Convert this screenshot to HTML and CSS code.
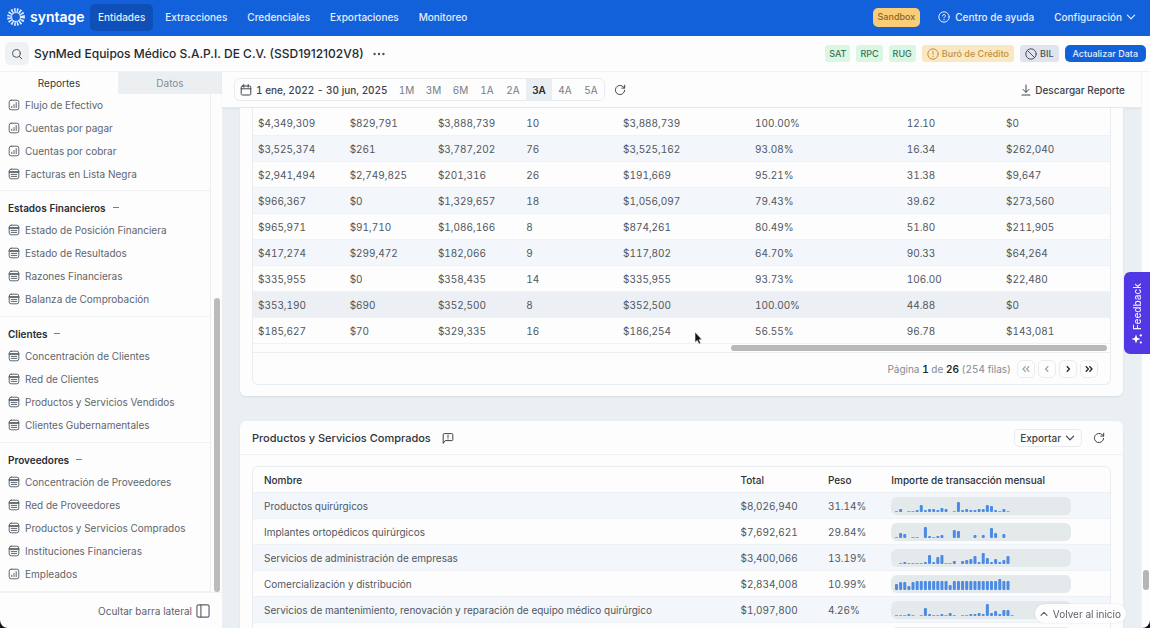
FILE: index.html
```html
<!DOCTYPE html>
<html lang="es">
<head>
<meta charset="utf-8">
<title>Syntage</title>
<link rel="stylesheet" href="styles.css">
</head>
<body>
<svg class="defs" aria-hidden="true">
  <symbol id="i-chart" viewBox="0 0 12 12"><rect x="1.2" y="1.2" width="9.6" height="9.6" rx="2"/><path d="M3.8 8.6V7.2M6 8.6V5.6M8.2 8.6V3.6"/></symbol>
  <symbol id="i-table" viewBox="0 0 12 12"><rect x="1.2" y="1.2" width="9.6" height="9.6" rx="2"/><path d="M1.2 3.6h9.6M1.2 4.4h9.6M3.2 6.4h5.6M3.2 8.4h5.6"/></symbol>
  <symbol id="i-reload" viewBox="0 0 12 12"><path d="M10.6 6.4A4.6 4.6 0 1 1 9.3 2.8L10.6 4M10.7 1.2V4.1H7.8"/></symbol>
  <symbol id="i-down" viewBox="0 0 10 10"><path d="M2 3.5l3 3 3-3"/></symbol>
</svg>

<header class="topbar">
  <a class="brand" href="#">
    <svg class="brand-mark" viewBox="0 0 20 20" aria-hidden="true"><circle cx="10" cy="10" r="6.4" stroke-width="5" stroke-dasharray="1.4 1.113"/><circle cx="10" cy="10" r="4.6" stroke-width="1.2" opacity=".6"/></svg>
    <span>syntage</span>
  </a>
  <nav class="mainnav">
    <a class="current" href="#">Entidades</a>
    <a href="#">Extracciones</a>
    <a href="#">Credenciales</a>
    <a href="#">Exportaciones</a>
    <a href="#">Monitoreo</a>
  </nav>
  <div class="topbar-end">
    <span class="sandbox">Sandbox</span>
    <a class="help" href="#"><svg class="ico" viewBox="0 0 12 12" aria-hidden="true"><circle cx="6" cy="6" r="5.2"/><path d="M4.6 4.8a1.4 1.4 0 1 1 2 1.3c-.5.2-.6.4-.6.8M6 8.4v.5"/></svg>Centro de ayuda</a>
    <button class="config" type="button">Configuración <svg class="ico" viewBox="0 0 10 10" aria-hidden="true"><use href="#i-down"/></svg></button>
  </div>
</header>

<div class="entity">
  <button class="search" type="button" aria-label="Buscar"><svg class="ico" viewBox="0 0 12 12" aria-hidden="true"><circle cx="5.4" cy="5.4" r="3.9"/><path d="M8.3 8.3l2.5 2.5"/></svg></button>
  <h1>SynMed Equipos Médico S.A.P.I. DE C.V. (SSD1912102V8)</h1>
  <button class="more" type="button" aria-label="Más opciones"><svg viewBox="0 0 12 4" aria-hidden="true"><circle cx="1.6" cy="2" r="1.2"/><circle cx="6" cy="2" r="1.2"/><circle cx="10.4" cy="2" r="1.2"/></svg></button>
  <div class="tags">
    <span class="tag ok">SAT</span>
    <span class="tag ok">RPC</span>
    <span class="tag ok">RUG</span>
    <span class="tag warn"><svg class="ico" viewBox="0 0 12 12" aria-hidden="true"><circle cx="6" cy="6" r="5.2"/><path d="M6 3.2v3.2M6 8.2v.6"/></svg>Buró de Crédito</span>
    <span class="tag off"><svg class="ico" viewBox="0 0 12 12" aria-hidden="true"><circle cx="6" cy="6" r="5.2"/><path d="M2.4 2.4l7.2 7.2"/></svg>BIL</span>
    <button class="update" type="button">Actualizar Data</button>
  </div>
</div>

<div class="body">
  <aside class="sidebar">
    <div class="tabs" role="tablist">
      <button type="button" role="tab" aria-selected="true">Reportes</button>
      <button type="button" role="tab" aria-selected="false">Datos</button>
    </div>
    <div class="side-scroll">
      <nav class="side-list">
        <section>
          <a href="#"><svg class="ico"><use href="#i-chart"/></svg>Flujo de Efectivo</a>
          <a href="#"><svg class="ico"><use href="#i-chart"/></svg>Cuentas por pagar</a>
          <a href="#"><svg class="ico"><use href="#i-chart"/></svg>Cuentas por cobrar</a>
          <a href="#"><svg class="ico"><use href="#i-table"/></svg>Facturas en Lista Negra</a>
        </section>
        <section>
          <h2>Estados Financieros <i></i></h2>
          <a href="#"><svg class="ico"><use href="#i-table"/></svg>Estado de Posición Financiera</a>
          <a href="#"><svg class="ico"><use href="#i-table"/></svg>Estado de Resultados</a>
          <a href="#"><svg class="ico"><use href="#i-table"/></svg>Razones Financieras</a>
          <a href="#"><svg class="ico"><use href="#i-table"/></svg>Balanza de Comprobación</a>
        </section>
        <section>
          <h2>Clientes <i></i></h2>
          <a href="#"><svg class="ico"><use href="#i-table"/></svg>Concentración de Clientes</a>
          <a href="#"><svg class="ico"><use href="#i-table"/></svg>Red de Clientes</a>
          <a href="#"><svg class="ico"><use href="#i-table"/></svg>Productos y Servicios Vendidos</a>
          <a href="#"><svg class="ico"><use href="#i-table"/></svg>Clientes Gubernamentales</a>
        </section>
        <section>
          <h2>Proveedores <i></i></h2>
          <a href="#"><svg class="ico"><use href="#i-table"/></svg>Concentración de Proveedores</a>
          <a href="#"><svg class="ico"><use href="#i-table"/></svg>Red de Proveedores</a>
          <a href="#"><svg class="ico"><use href="#i-table"/></svg>Productos y Servicios Comprados</a>
          <a href="#"><svg class="ico"><use href="#i-table"/></svg>Instituciones Financieras</a>
          <a href="#"><svg class="ico"><use href="#i-chart"/></svg>Empleados</a>
        </section>
      </nav>
      <div class="side-track"><div class="side-thumb"></div></div>
    </div>
    <button class="collapse" type="button">Ocultar barra lateral <svg class="ico" viewBox="0 0 12 12" aria-hidden="true"><rect x=".8" y=".8" width="10.4" height="10.4" rx="1.4"/><path d="M4.2 .8v10.4"/></svg></button>
  </aside>

  <main class="main">
    <div class="toolbar">
      <div class="range">
        <button class="dates" type="button"><svg class="ico" viewBox="0 0 12 12" aria-hidden="true"><rect x="1.2" y="2" width="9.6" height="9" rx="1.4"/><path d="M1.2 4.8h9.6M3.8 .6v2.6M8.2 .6v2.6"/></svg>1 ene, 2022 - 30 jun, 2025</button>
        <button type="button">1M</button>
        <button type="button">3M</button>
        <button type="button">6M</button>
        <button type="button">1A</button>
        <button type="button">2A</button>
        <button class="on" type="button">3A</button>
        <button type="button">4A</button>
        <button type="button">5A</button>
      </div>
      <button class="reload" type="button" aria-label="Recargar"><svg class="ico"><use href="#i-reload"/></svg></button>
      <button class="download" type="button"><svg class="ico" viewBox="0 0 12 12" aria-hidden="true"><path d="M6 1v7M3 5.4l3 3 3-3M2 11h8"/></svg>Descargar Reporte</button>
    </div>

    <div class="content">
      <section class="card first">
        <div class="frame open">
          <table class="wide">
            <colgroup><col class="w1"><col class="w2"><col class="w3"><col class="w4"><col class="w5"><col class="w6"><col class="w7"><col></colgroup>
            <tbody>
              <tr><td>$4,349,309</td><td>$829,791</td><td>$3,888,739</td><td>10</td><td>$3,888,739</td><td>100.00%</td><td>12.10</td><td>$0</td></tr>
              <tr><td>$3,525,374</td><td>$261</td><td>$3,787,202</td><td>76</td><td>$3,525,162</td><td>93.08%</td><td>16.34</td><td>$262,040</td></tr>
              <tr><td>$2,941,494</td><td>$2,749,825</td><td>$201,316</td><td>26</td><td>$191,669</td><td>95.21%</td><td>31.38</td><td>$9,647</td></tr>
              <tr><td>$966,367</td><td>$0</td><td>$1,329,657</td><td>18</td><td>$1,056,097</td><td>79.43%</td><td>39.62</td><td>$273,560</td></tr>
              <tr><td>$965,971</td><td>$91,710</td><td>$1,086,166</td><td>8</td><td>$874,261</td><td>80.49%</td><td>51.80</td><td>$211,905</td></tr>
              <tr><td>$417,274</td><td>$299,472</td><td>$182,066</td><td>9</td><td>$117,802</td><td>64.70%</td><td>90.33</td><td>$64,264</td></tr>
              <tr><td>$335,955</td><td>$0</td><td>$358,435</td><td>14</td><td>$335,955</td><td>93.73%</td><td>106.00</td><td>$22,480</td></tr>
              <tr class="hover"><td>$353,190</td><td>$690</td><td>$352,500</td><td>8</td><td>$352,500</td><td>100.00%</td><td>44.88</td><td>$0</td></tr>
              <tr><td>$185,627</td><td>$70</td><td>$329,335</td><td>16</td><td>$186,254</td><td>56.55%</td><td>96.78</td><td>$143,081</td></tr>
            </tbody>
          </table>
          <div class="h-track"><div class="h-thumb"></div></div>
          <div class="pager">
            <span>Página <b>1</b> de <b>26</b> (254 filas)</span>
            <button type="button" disabled aria-label="Primera página"><svg viewBox="0 0 10 10"><path d="M4.6 2.2L2 5l2.6 2.8M8.2 2.2L5.6 5l2.6 2.8"/></svg></button>
            <button type="button" disabled aria-label="Página anterior"><svg viewBox="0 0 10 10"><path d="M6.2 2.2L3.6 5l2.6 2.8"/></svg></button>
            <button type="button" aria-label="Página siguiente"><svg viewBox="0 0 10 10"><path d="M3.8 2.2L6.4 5 3.8 7.8"/></svg></button>
            <button type="button" aria-label="Última página"><svg viewBox="0 0 10 10"><path d="M1.8 2.2L4.4 5 1.8 7.8M5.4 2.2L8 5 5.4 7.8"/></svg></button>
          </div>
        </div>
      </section>

      <section class="card">
        <div class="card-head">
          <h3>Productos y Servicios Comprados</h3>
          <svg class="ico" viewBox="0 0 12 12" aria-hidden="true"><path d="M1.2 11V2.6a1 1 0 0 1 1-1h7.6a1 1 0 0 1 1 1v5a1 1 0 0 1-1 1H3.6zM6 3.2v2.200M6 6.800v.2"/></svg>
          <button class="export" type="button">Exportar <svg class="ico" viewBox="0 0 10 10" aria-hidden="true"><use href="#i-down"/></svg></button>
          <button class="reload" type="button" aria-label="Recargar"><svg class="ico"><use href="#i-reload"/></svg></button>
        </div>
        <div class="card-body">
          <div class="frame">
            <table class="products">
              <colgroup><col class="p1"><col class="p2"><col class="p3"><col></colgroup>
              <thead><tr><th>Nombre</th><th>Total</th><th>Peso</th><th>Importe de transacción mensual</th></tr></thead>
              <tbody>
                <tr><td>Productos quirúrgicos</td><td>$8,026,940</td><td>31.14%</td><td><svg class="spark" data-values="1 3 0 1 1 2 7 2 3 3 2 4 3 0 1 10 2 3 2 2 3 3 7 6 2 1 3 1"></svg></td></tr>
                <tr><td>Implantes ortopédicos quirúrgicos</td><td>$7,692,621</td><td>29.84%</td><td><svg class="spark" data-values="1 5 4 0 1 1 0 11 2 1 2 3 0 0 8 7 0 0 0 3 0 3 0 10 5 0 4"></svg></td></tr>
                <tr><td>Servicios de administración de empresas</td><td>$3,400,066</td><td>13.19%</td><td><svg class="spark" data-values="0 1 2 1 1 1 1 2 9 2 7 9 1 1 3 0 3 4 5 8 2 11 6 2 5 2 4 8"></svg></td></tr>
                <tr><td>Comercialización y distribución</td><td>$2,834,008</td><td>10.99%</td><td><svg class="spark" data-values="6 8 8 4 8 9 9 9 9 9 9 9 9 5 9 9 9 9 9 9 9 9 9 9 9 11 9 9"></svg></td></tr>
                <tr><td>Servicios de mantenimiento, renovación y reparación de equipo médico quirúrgico</td><td>$1,097,800</td><td>4.26%</td><td><svg class="spark" data-values="1 1 1 2 1 0 1 8 2 1 1 2 1 3 1 0 1 1 2 2 3 2 12 3 5 2 6 6 1"></svg></td></tr>
                <tr><td></td><td></td><td></td><td><svg class="spark" data-values="0"></svg></td></tr>
              </tbody>
            </table>
          </div>
        </div>
      </section>
    </div>
  </main>
  <div class="page-track"><div class="page-thumb"></div></div>
</div>

<button class="to-top" type="button"><svg class="ico" viewBox="0 0 10 10" aria-hidden="true"><path d="M2.500 6.200L5 3.700l2.500 2.500"/></svg>Volver al inicio</button>
<button class="feedback" type="button"><svg viewBox="0 0 12 12" aria-hidden="true"><path d="M7 1.500l1.200 3.300L11.500 6 8.200 7.200 7 10.500 5.800 7.200 2.500 6l3.300-1.200z"/><circle cx="2.200" cy="2.600" r="1.100"/><circle cx="2.200" cy="9.600" r="1.200"/></svg>Feedback</button>
<svg class="cursor" viewBox="0 0 9 14" aria-hidden="true"><path d="M1 1v10.500l2.300-2.100 1.600 3.700 1.800-.8-1.600-3.600h3z"/></svg>
<script src="script.js"></script>
</body>
</html>
```

FILE: styles.css
```css
* { box-sizing: border-box; }

html { background: #0b1420; }

body {
  margin: 0;
  height: 100vh;
  display: flex;
  flex-direction: column;
  overflow: hidden;
  border-radius: 0 0 8px 8px;
  background: #fdfdfd;
  color: #50565e;
  font: 10px/16px Inter, "Liberation Sans", sans-serif;
  font-variant-numeric: tabular-nums;
}

a { color: inherit; text-decoration: none; }

button {
  display: inline-flex;
  align-items: center;
  justify-content: center;
  margin: 0;
  padding: 0;
  border: 0;
  background: none;
  color: inherit;
  font: inherit;
  white-space: nowrap;
}

h1, h2, h3 { margin: 0; }

.defs { position: absolute; width: 0; height: 0; }

.ico {
  flex: none;
  width: 12px;
  height: 12px;
  fill: none;
  stroke: currentColor;
  stroke-linecap: round;
  stroke-linejoin: round;
}

/* Top navigation */
.topbar {
  flex: none;
  display: flex;
  align-items: center;
  height: 36px;
  padding: 0 13px 2px 6px;
  background: #1261da;
  color: #e3edfc;
  font-weight: 500;
}

.brand {
  display: flex;
  align-items: center;
  gap: 4px;
  width: 84px;
  color: #fff;
  font-size: 14px;
  font-weight: 600;
}

.brand-mark { width: 20px; height: 20px; fill: none; stroke: #e2eeff; }

.mainnav { display: flex; }

.mainnav a {
  padding: 5px 8px 6px;
  margin-right: 4px;
  border-radius: 5px;
}

.mainnav .current { background: #0e50b8; }

.topbar-end {
  display: flex;
  align-items: center;
  margin-left: auto;
}

.sandbox {
  padding: 1px 5px 2px;
  border-radius: 5px;
  background: #f9cd78;
  color: #8a6524;
  font-size: 9px;
}

.help { display: flex; align-items: center; gap: 5px; margin: 0 20px 0 18px; }
.config { gap: 3px; }

/* Entity header */
.entity {
  flex: none;
  display: flex;
  align-items: center;
  height: 36px;
  padding: 0 4px 0 5px;
  border-bottom: 1px solid #eff2f4;
}

.search {
  width: 24px;
  height: 23px;
  border-radius: 5px;
  background: #eff2f5;
}

.entity h1 {
  margin: 0 9px 0 5px;
  color: #24292f;
  font-size: 12px;
  font-weight: 500;
  font-variant-numeric: normal;
}

.more svg { width: 12px; height: 4px; fill: #4d545c; }

.tags { display: flex; align-items: center; gap: 6px; margin-left: auto; }

.tag {
  display: flex;
  align-items: center;
  gap: 3px;
  height: 17px;
  padding: 0 5px;
  border-radius: 3px;
  font-size: 9px;
  font-weight: 500;
}

.ok { padding: 0 4px; background: #d9f7e3; color: #3f7358; }
.warn { background: #fbe7c0; color: #c0924a; }
.off { background: #e0e5ed; color: #4a525e; }

.update {
  height: 17px;
  padding: 0 8px;
  border-radius: 5px;
  background: #1261da;
  color: #e6effc;
  font-size: 9px;
  font-weight: 500;
}

/* Layout */
.body { flex: 1; display: flex; min-height: 0; }

.sidebar {
  flex: none;
  display: flex;
  flex-direction: column;
  width: 222px;
}

.tabs { flex: none; display: flex; height: 22px; }
.tabs button { flex: 1; color: #33393f; }
.tabs button + button { flex: none; width: 104px; background: #eceff2; color: #868d95; }

.side-scroll { flex: 1; display: flex; min-height: 0; }

.side-list {
  flex: 1;
  overflow: hidden;
  border-right: 1px solid #eceef0;
  color: #5f656d;
}

.side-list section {
  padding: 6px 8px;
  border-bottom: 1px solid #eff1f3;
}

.side-list section:first-child { padding: 0 8px 5px; margin-top: -1px; }

.side-list a {
  display: flex;
  align-items: center;
  gap: 5px;
  height: 23px;
}

.side-list h2 {
  display: flex;
  align-items: center;
  gap: 7px;
  height: 21px;
  color: #272c33;
  font-size: 10px;
  font-weight: 600;
}

.side-list i { width: 6px; border-top: 1px solid #777d85; }

.side-track {
  display: flex;
  align-items: flex-end;
  justify-content: center;
  width: 11px;
}

.side-thumb { width: 6px; height: 59%; border-radius: 3px; background: #bbb; }

.collapse {
  flex: none;
  justify-content: flex-end;
  gap: 4px;
  height: 36px;
  padding: 0 12px 0 0;
  border-top: 1px solid #eff1f3;
  color: #5d636b;
}

.collapse .ico { width: 14px; height: 14px; }

.main {
  flex: 1;
  display: flex;
  flex-direction: column;
  min-width: 0;
  background: #eaeff3;
}

.toolbar {
  flex: none;
  display: flex;
  align-items: center;
  height: 36px;
  padding: 0 16px 0 12px;
  border-bottom: 1px solid #e5e8eb;
  background: #fdfdfd;
  box-shadow: 0 1px 2px #0000000d;
}

.range {
  display: flex;
  height: 23px;
  overflow: hidden;
  border: 1px solid #e8ecef;
  border-radius: 6px;
  color: #757c84;
}

.range button { width: 26px; }
.range button:nth-child(n+2):nth-child(-n+4) { width: 27px; }
.range .dates { justify-content: flex-start; gap: 4px; width: 158px; padding-left: 5px; color: #3d434a; font-weight: 500; }
.range .on { background: #e9eef2; color: #24292f; font-weight: 600; }

.reload { margin-left: 9px; color: #3d434a; }
.download { gap: 3px; margin-left: auto; color: #3d434a; font-weight: 500; }

.content {
  flex: 1;
  min-height: 0;
  overflow: hidden;
  padding: 0 18px;
}

/* Cards and tables */
.card {
  margin-bottom: 25px;
  border-radius: 6px;
  background: #fdfdfd;
  box-shadow: 0 1px 2px #00000014;
}

.card.first {
  padding: 0 12px 11px;
  border-radius: 0 0 6px 6px;
}

.frame {
  overflow: hidden;
  border: 1px solid #e9edf0;
  border-radius: 6px;
}

.frame.open { border-top: 0; border-radius: 0 0 6px 6px; padding-top: 2px; }

table {
  width: 100%;
  table-layout: fixed;
  border-collapse: separate;
  border-spacing: 0;
}

td, th {
  height: 26px;
  padding: 0 0 0 11px;
  border-bottom: 1px solid #eff2f5;
  text-align: left;
  white-space: nowrap;
}

th { color: #2a2f35; font-weight: 500; }

.wide td { padding-left: 5px; }
.wide tr:nth-child(even) td, .products tbody tr:nth-child(odd) td { background: #f3f6fa; }
.wide .hover td { background: #eceff3 !important; }

.w1 { width: 10.7%; }
.w2 { width: 10.3%; }
.w3 { width: 10.3%; }
.w4 { width: 11.3%; }
.w5 { width: 15.4%; }
.w6 { width: 17.7%; }
.w7 { width: 11.6%; }

.p1 { width: 55.6%; }
.p2 { width: 10.2%; }
.p3 { width: 7.4%; }

.h-track {
  display: flex;
  align-items: center;
  justify-content: flex-end;
  height: 9px;
  padding-right: 3px;
  border-bottom: 1px solid #eceff1;
}

.h-thumb { width: 44%; height: 6px; border-radius: 3px; background: #b9b9b9; }

.pager {
  display: flex;
  align-items: center;
  justify-content: flex-end;
  gap: 3px;
  height: 31px;
  padding-right: 12px;
  color: #858b92;
}

.pager b { color: #24292f; font-weight: 600; }
.pager span { margin-right: 3px; }

.pager button {
  width: 18px;
  height: 18px;
  border: 1px solid #e9ecef;
  border-radius: 5px;
  color: #24292f;
}

.pager button:disabled { color: #a3a8ae; }
.pager svg { width: 10px; height: 10px; fill: none; stroke: currentColor; stroke-width: 1.3; }

.card-head {
  display: flex;
  align-items: center;
  height: 34px;
  padding: 0 18px 0 12px;
  border-bottom: 1px solid #eff2f4;
  color: #3d434a;
}

.card-head h3 {
  margin-right: 11px;
  color: #2e343a;
  font-size: 11px;
  font-weight: 500;
}

.export {
  gap: 3px;
  height: 18px;
  margin-left: auto;
  padding: 0 5px;
  border: 1px solid #e9ecef;
  border-radius: 5px;
  font-weight: 500;
}

.card-head .reload { margin-left: 11px; }

.card-body { padding: 11px 12px; }

.spark {
  display: block;
  width: 180px;
  height: 18px;
  border-radius: 6px;
  background: #e4e9ec;
  fill: #4c8be3;
}

.page-track {
  flex: none;
  display: flex;
  flex-direction: column;
  justify-content: flex-end;
  align-items: center;
  width: 9px;
  padding-bottom: 38px;
  border-left: 1px solid #f2f3f4;
}

.page-thumb { width: 6px; height: 20px; border-radius: 3px; background: #b5b5b5; }

/* Floating elements */
.to-top {
  position: fixed;
  right: 24px;
  bottom: 5px;
  gap: 3px;
  height: 19px;
  padding: 0 5px 0 3px;
  border-radius: 9px;
  background: #fdfdfd;
  box-shadow: 0 0 2px #0000001f;
  color: #5d636b;
}

.feedback {
  position: fixed;
  top: 272px;
  right: 0;
  gap: 3px;
  width: 26px;
  height: 82px;
  padding-bottom: 2px;
  border-radius: 0 6px 6px 0;
  background: #5038e4;
  color: #f0edff;
  font-weight: 500;
  writing-mode: vertical-rl;
  transform: rotate(180deg);
}

.feedback svg { width: 12px; height: 12px; fill: #fff; }

.cursor {
  position: fixed;
  top: 331px;
  left: 694px;
  width: 9px;
  height: 14px;
  fill: #10161d;
  stroke: #fff;
  stroke-width: .6;
}
```

FILE: script.js
```js
const PITCH = 4.13;
const BASELINE = 15;

document.querySelectorAll('.spark').forEach((svg) => {
  svg.dataset.values.split(' ').map(Number).forEach((value, i) => {
    if (!value) return;
    const bar = document.createElementNS('http://www.w3.org/2000/svg', 'rect');
    bar.setAttribute('x', 4 + i * PITCH);
    bar.setAttribute('y', BASELINE - value);
    bar.setAttribute('width', 3);
    bar.setAttribute('height', value);
    bar.setAttribute('rx', value > 1 ? 1 : 0);
    if (value === 1) bar.setAttribute('opacity', 0.7);
    svg.append(bar);
  });
});
```
